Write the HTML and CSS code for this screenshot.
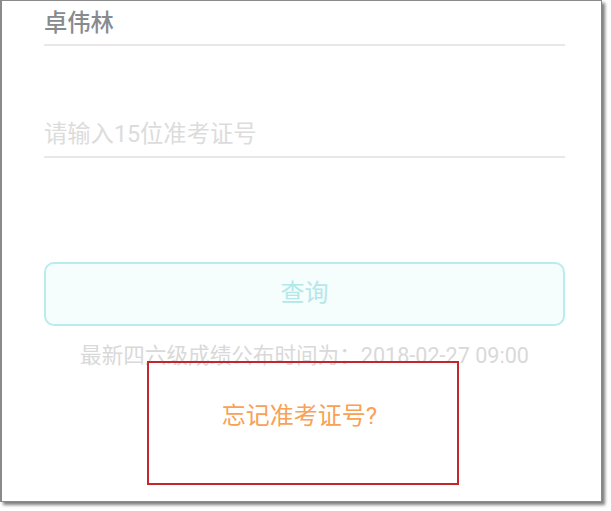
FILE: index.html
```html
<!DOCTYPE html>
<html lang="zh-CN">
<head>
<meta charset="utf-8">
<title>四六级查询</title>
<link rel="stylesheet" href="styles.css">
</head>
<body>
<div class="frame">
  <div class="form">
    <div class="field field-name">卓伟林</div>
    <div class="field field-id">请输入15位准考证号</div>
    <div class="btn">查询</div>
    <div class="info">最新四六级成绩公布时间为：2018-02-27 09:00</div>
    <div class="forgot">忘记准考证号?</div>
  </div>
</div>
<div class="highlight"></div>
</body>
</html>
```

FILE: styles.css
```css
html, body {
  margin: 0;
  padding: 0;
  background: #ffffff;
}

body {
  position: relative;
  width: 611px;
  height: 511px;
  overflow: hidden;
  font-family: Roboto, "Noto Sans CJK SC", sans-serif;
}

.frame {
  box-sizing: border-box;
  width: 602px;
  height: 502px;
  background: #ffffff;
  border: 1px solid #8a8a8a;
  border-left-width: 2px;
  box-shadow: 3px 3px 3px rgba(0, 0, 0, 0.5);
}

.form {
  display: flex;
  flex-direction: column;
  padding: 0 36px 0 42px;
}

.field {
  font-size: 23.3px;
  line-height: 30px;
  border-bottom: 2px solid #e8e8e8;
}

.field-name {
  padding: 7px 0 6px;
  color: #878b90;
  font-weight: 500;
}

.field-id {
  margin-top: 73px;
  padding: 0 0 7px;
  color: #dcdcdc;
}

.btn {
  box-sizing: border-box;
  margin-top: 104px;
  height: 64px;
  border: 2px solid #b9ecec;
  border-radius: 10px;
  background: #f5fdfd;
  color: #b3e8e9;
  font-size: 24px;
  line-height: 1;
  padding-bottom: 3px;
  display: flex;
  align-items: center;
  justify-content: center;
}

.info {
  margin-top: 18px;
  font-size: 21.6px;
  line-height: 24px;
  color: #d9d9d9;
  text-align: center;
}

.forgot {
  margin-top: 33px;
  font-size: 24px;
  line-height: 30px;
  color: #f9a155;
  text-align: center;
  padding-right: 10px;
}

.highlight {
  position: absolute;
  left: 147px;
  top: 361px;
  width: 308px;
  height: 120px;
  border: 2px solid #c5262e;
}
```
